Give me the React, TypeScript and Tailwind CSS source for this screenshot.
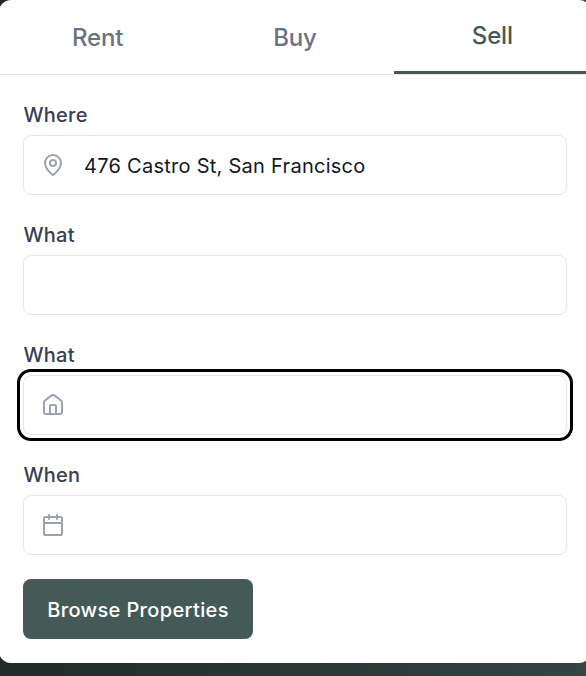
import React from "react";

const icon = {
  width: 24,
  height: 24,
  viewBox: "0 0 24 24",
  fill: "none",
  stroke: "currentColor",
  strokeWidth: 2,
  strokeLinecap: "round" as const,
  strokeLinejoin: "round" as const,
  className: "shrink-0 text-[#9ca3af]",
};

const PinIcon = () => (
  <svg {...icon}>
    <path d="M20 10c0 4.99-5.54 10.19-7.4 11.8a1 1 0 0 1-1.2 0C9.54 20.19 4 14.99 4 10a8 8 0 0 1 16 0" />
    <circle cx="12" cy="10" r="3" />
  </svg>
);

const HomeIcon = () => (
  <svg {...icon}>
    <path d="M3 9.3a2 2 0 0 1 .75-1.55l7.2-5.6a1.7 1.7 0 0 1 2.1 0l7.2 5.6A2 2 0 0 1 21 9.3V19a2 2 0 0 1-2 2H5a2 2 0 0 1-2-2Z" />
    <path d="M9 21v-8a1 1 0 0 1 1-1h4a1 1 0 0 1 1 1v8" />
  </svg>
);

const CalendarIcon = () => (
  <svg {...icon}>
    <rect x="3" y="4" width="18" height="18" rx="1.6" />
    <path d="M3 10h18M8 2v4M16 2v4" />
  </svg>
);

function Field({ label, value, children, focused }: { label: string; value?: string; children?: React.ReactNode; focused?: boolean }) {
  return (
    <div className="flex flex-col">
      <span className="h-8 pl-[0.5px] text-[20px] leading-6 font-medium tracking-[0.25px] text-[#374151]">{label}</span>
      <div
        className={`flex h-[60px] items-center gap-[19px] rounded-lg border border-[#e5e5e5] pl-[17px] text-[20px] text-[#111827] ${
          focused ? "outline-3 outline-offset-3 outline-black" : ""
        }`}
      >
        {children}
        {value && <span className="pt-0.5 tracking-[0.27px]">{value}</span>}
      </div>
    </div>
  );
}

export default function App() {
  return (
    <div className="h-[676px] w-full overflow-hidden bg-linear-to-r from-[#202b29] to-[#334442] font-['Inter',sans-serif]">
      <div className="-ml-px h-[663px] w-[592px] rounded-xl bg-white">
        <div className="grid h-[75px] grid-cols-3 border-b border-[#e5e5e5] text-center text-[24px] font-medium tracking-[-0.2px] text-[#6b7280]">
          <div className="pt-5 leading-9">Rent</div>
          <div className="pt-5 leading-9">Buy</div>
          <div className="border-b-3 border-[#455a56] pt-[18px] leading-9 text-[#455a56]">Sell</div>
        </div>
        <div className="flex flex-col gap-7 px-6 pt-7">
          <Field label="Where" value="476 Castro St, San Francisco"><PinIcon /></Field>
          <Field label="What" />
          <Field label="What" focused><HomeIcon /></Field>
          <Field label="When"><CalendarIcon /></Field>
        </div>
        <button className="mt-6 ml-6 h-[60px] w-[230px] rounded-lg bg-[#455a56] pt-0.5 text-[20px] font-medium tracking-[0.36px] text-white">Browse Properties</button>
      </div>
    </div>
  );
}
